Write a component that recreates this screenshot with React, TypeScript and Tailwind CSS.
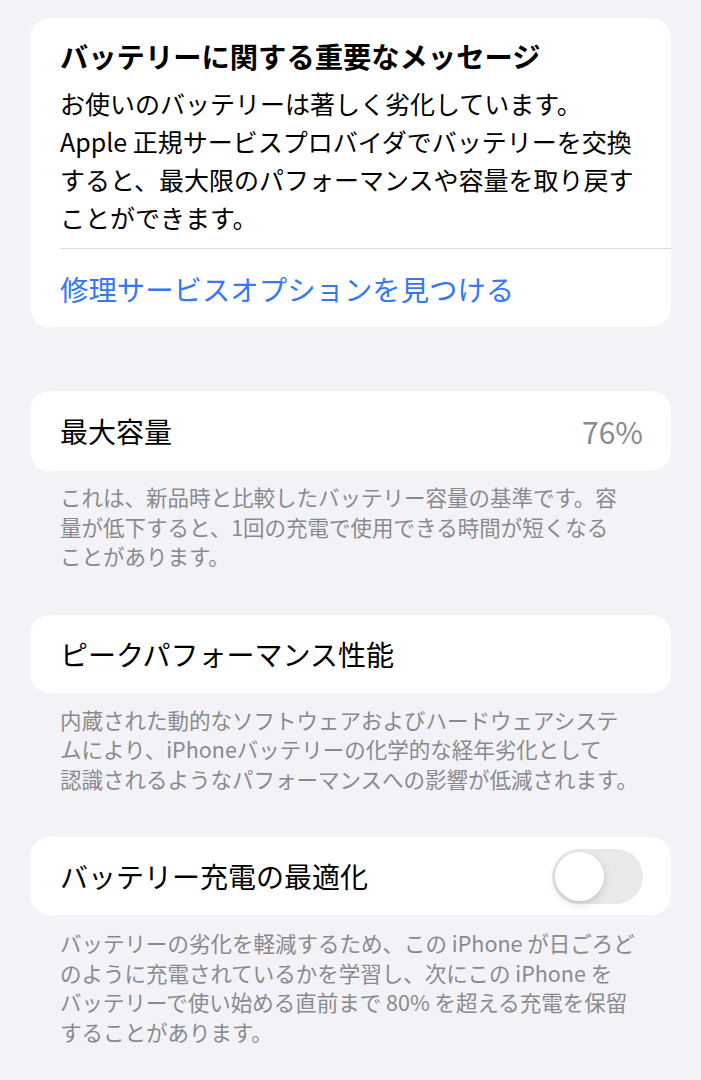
import React from 'react';

const font = { fontFamily: '"Noto Sans CJK JP", "Noto Sans", sans-serif' };

interface FooterProps {
  lines: string[];
  className?: string;
}

const Footer: React.FC<FooterProps> = ({ lines, className }) => (
  <div className={`pl-[30px] text-[21.5px] leading-[29.5px] text-[#8a8a8e] ${className ?? ''}`}>
    {lines.map((l, i) => (
      <div key={i} className="whitespace-nowrap">
        {l}
      </div>
    ))}
  </div>
);

const Toggle: React.FC = () => (
  <div className="relative h-[55px] w-[91px] rounded-full bg-[#e9e9eb]">
    <div className="absolute left-[3px] top-[3px] h-[49px] w-[49px] rounded-full bg-white shadow-[0_3px_8px_rgba(0,0,0,0.15),0_1px_1px_rgba(0,0,0,0.06)]" />
  </div>
);

const App: React.FC = () => {
  return (
    <div className="min-h-[1080px] bg-[#f2f2f7] px-[30px] pt-[18px] text-black" style={font}>
      {/* Important message card */}
      <div className="rounded-[20px] bg-white pl-[30px]">
        <div className="pt-[19px] text-[28.3px] font-bold leading-[38px]">バッテリーに関する重要なメッセージ</div>
        <div className="mt-[9px] pr-[20px] text-[25px] leading-[38px]">
          <div className="whitespace-nowrap">お使いのバッテリーは著しく劣化しています。</div>
          <div className="whitespace-nowrap">Apple 正規サービスプロバイダでバッテリーを交換</div>
          <div className="whitespace-nowrap">すると、最大限のパフォーマンスや容量を取り戻す</div>
          <div className="whitespace-nowrap">ことができます。</div>
        </div>
        <div className="mt-[12px] h-px bg-[#dcdce0]" />
        <div className="pb-[19px] pt-[21px] text-[28.4px] leading-[38px] text-[#3478f6]">修理サービスオプションを見つける</div>
      </div>

      {/* Max capacity */}
      <div className="mt-[64px] flex h-[80px] items-center justify-between rounded-[20px] bg-white pl-[30px] pr-[28px]">
        <span className="text-[28px]">最大容量</span>
        <span className="text-[30px] text-[#8a8a8e]">76%</span>
      </div>
      <Footer
        className="mt-[11px]"
        lines={[
          'これは、新品時と比較したバッテリー容量の基準です。容',
          '量が低下すると、1回の充電で使用できる時間が短くなる',
          'ことがあります。',
        ]}
      />

      {/* Peak performance */}
      <div className="mt-[44px] flex h-[78px] items-center rounded-[20px] bg-white pl-[30px]">
        <span className="text-[28px]">ピークパフォーマンス性能</span>
      </div>
      <Footer
        className="mt-[12px]"
        lines={[
          '内蔵された動的なソフトウェアおよびハードウェアシステ',
          'ムにより、iPhoneバッテリーの化学的な経年劣化として',
          '認識されるようなパフォーマンスへの影響が低減されます。',
        ]}
      />

      {/* Optimized charging */}
      <div className="mt-[44px] flex h-[78px] items-center justify-between rounded-[20px] bg-white pl-[30px] pr-[28px]">
        <span className="text-[28px]">バッテリー充電の最適化</span>
        <Toggle />
      </div>
      <Footer
        className="mt-[13px]"
        lines={[
          'バッテリーの劣化を軽減するため、この iPhone が日ごろど',
          'のように充電されているかを学習し、次にこの iPhone を',
          'バッテリーで使い始める直前まで 80% を超える充電を保留',
          'することがあります。',
        ]}
      />
    </div>
  );
};

export default App;
